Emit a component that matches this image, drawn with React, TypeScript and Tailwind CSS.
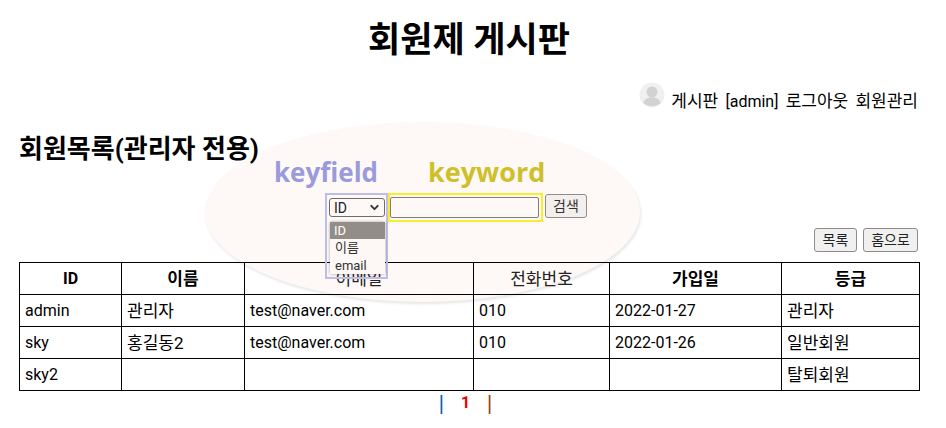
import { ChevronDown } from 'lucide-react';

const FONT = "font-['Roboto','Noto_Sans_CJK_KR',sans-serif]";

const COLUMNS = [
  { label: 'ID', width: 'w-[102px]', style: 'text-[16px] font-bold' },
  { label: '이름', width: 'w-[123px]', style: 'text-[17px] font-bold' },
  { label: '이메일', width: 'w-[229px]', style: 'text-[17px] font-normal text-[#222]' },
  { label: '전화번호', width: 'w-[136px]', style: 'text-[17px] font-normal text-[#222]' },
  { label: '가입일', width: 'w-[172px]', style: 'text-[17px] font-bold' },
  { label: '등급', width: 'w-[138px]', style: 'text-[17px] font-bold' },
];

const MEMBERS = [
  ['admin', '관리자', 'test@naver.com', '010', '2022-01-27', '관리자'],
  ['sky', '홍길동2', 'test@naver.com', '010', '2022-01-26', '일반회원'],
  ['sky2', '', '', '', '', '탈퇴회원'],
];

const isKorean = (s: string) => /[가-힣]/.test(s);

function Avatar() {
  return (
    <svg width="26" height="26" viewBox="0 0 26 26" className="shrink-0 mb-[6px]">
      <circle cx="13" cy="13" r="12.500" fill="#f0f0f0" />
      <circle cx="13" cy="10" r="5.500" fill="#d2d2d2" />
      <path d="M4.500 21c0-3.500 4-5.500 8.500-5.500s8.500 2 8.500 5.500c-2 2-5 3.200-8.500 3.200s-6.500-1.200-8.500-3.200z" fill="#d2d2d2" />
    </svg>
  );
}

function SearchForm() {
  return (
    <div className="relative z-10 h-[28px] ml-[306px] flex items-start">
      <div className="relative w-[63px] h-[28px] shrink-0">
        {/* 열린 셀렉트 목록은 표 위로 겹친다 */}
        <div className="absolute inset-x-0 top-0 h-[86px] border-[2px] border-[#bdbde8] flex flex-col pt-[3px] pl-[2px]">
          <div className="w-[56px] h-[19px] shrink-0 border border-[#6f6b69] rounded-[3px] flex items-center justify-between pl-[4px] pr-[3px] text-[14px] leading-none text-[#222]">
            <span>ID</span>
            <ChevronDown size={13} strokeWidth={3.5} className="text-[#333]" />
          </div>
          <ul className="mt-[5px] ml-[1px] w-[55px] h-[52px] bg-[#fdf8f5] shadow-[0_0_3px_rgba(0,0,0,0.35)] text-[13px] leading-[17px] text-[#333]">
            <li className="h-[17px] bg-[#928d89] text-white pl-[4px]">ID</li>
            <li className="h-[18px] pl-[5px] leading-[18px]">이름</li>
            <li className="h-[17px] pl-[5px]">email</li>
          </ul>
        </div>
      </div>

      <div className="w-[155px] h-[29px] shrink-0 border-[2px] border-[#fbec2c] flex items-center">
        <input className="w-[149px] h-[21px] border border-[#807c7a] rounded-[2px] outline-none bg-transparent" />
      </div>

      <button className="ml-[2px] mt-[1px] w-[42px] h-[24px] border border-[#8f8c8a] rounded-[3px] bg-[#f3efec] text-[14px] leading-none text-[#333]">검색</button>
    </div>
  );
}

export default function App() {
  return (
    <div className={`relative w-[946px] h-[428px] overflow-hidden bg-white text-black ${FONT}`}>
      {/* 배경 타원 */}
      <div className="absolute left-[205px] top-[122px] w-[435px] h-[180px] rounded-[50%] bg-[#fef9f6] shadow-[1px_2px_3px_rgba(0,0,0,0.1)]" />

      <div className="relative w-[900px] ml-[19px]">
        <h1 className="h-[80px] pt-[15px] text-center text-[35px] leading-[52px] font-bold">회원제 게시판</h1>

        <div className="h-[35px] flex items-center justify-end gap-[6px] leading-[24px]">
          <Avatar />
          <span className="pt-[8px] pr-[1px] text-[17px] [word-spacing:3px]">
            게시판 <span className="text-[16px]">[admin]</span> 로그아웃 회원관리
          </span>
        </div>

        <div className="mt-[16px] h-[62px] flex items-start">
          <h2 className="w-[255px] shrink-0 text-[26px] leading-[36px] font-bold whitespace-nowrap">회원목록(관리자 전용)</h2>
          <div className="pt-[24px] flex leading-[34px] font-bold font-['Open_Sans',sans-serif]">
            <span className="w-[154px] text-[26px] text-[#9a9adc]">keyfield</span>
            <span className="text-[27px] text-[#cfbf2a]">keyword</span>
          </div>
        </div>

        <SearchForm />

        <div className="mt-[7px] h-[24px] pr-[1px] flex justify-end gap-[6px] text-[14px] leading-none text-[#222]">
          <button className="w-[43px] h-[24px] border border-[#8f8c8a] rounded-[3px] bg-[#f0f0f0]">목록</button>
          <button className="w-[55px] h-[24px] border border-[#8f8c8a] rounded-[3px] bg-[#f0f0f0]">홈으로</button>
        </div>

        <table className="mt-[10px] w-[900px] table-fixed border-collapse border border-black">
          <thead>
            <tr className="h-[32px]">
              {COLUMNS.map(c => (
                <th key={c.label} className={`${c.width} ${c.style} border border-black p-0 text-center leading-[24px]`}>{c.label}</th>
              ))}
            </tr>
          </thead>
          <tbody>
            {MEMBERS.map(row => (
              <tr key={row[0]} className="h-[32px]">
                {row.map((cell, i) => (
                  <td key={i} className={`${isKorean(cell) ? 'text-[17px]' : 'text-[16px]'} border border-black px-[5px] py-0 leading-[24px]`}>{cell}</td>
                ))}
              </tr>
            ))}
          </tbody>
        </table>

        <div className="h-[24px] pr-[7px] flex items-center justify-center leading-[24px]">
          <span className="text-[20px] font-['Liberation_Sans',sans-serif] text-[#0a5fb0]">|</span>
          <b className="mx-[17px] text-[16px] text-[#f00000]">1</b>
          <span className="text-[20px] font-['Liberation_Sans',sans-serif] text-[#a04010]">|</span>
        </div>
      </div>
    </div>
  );
}
